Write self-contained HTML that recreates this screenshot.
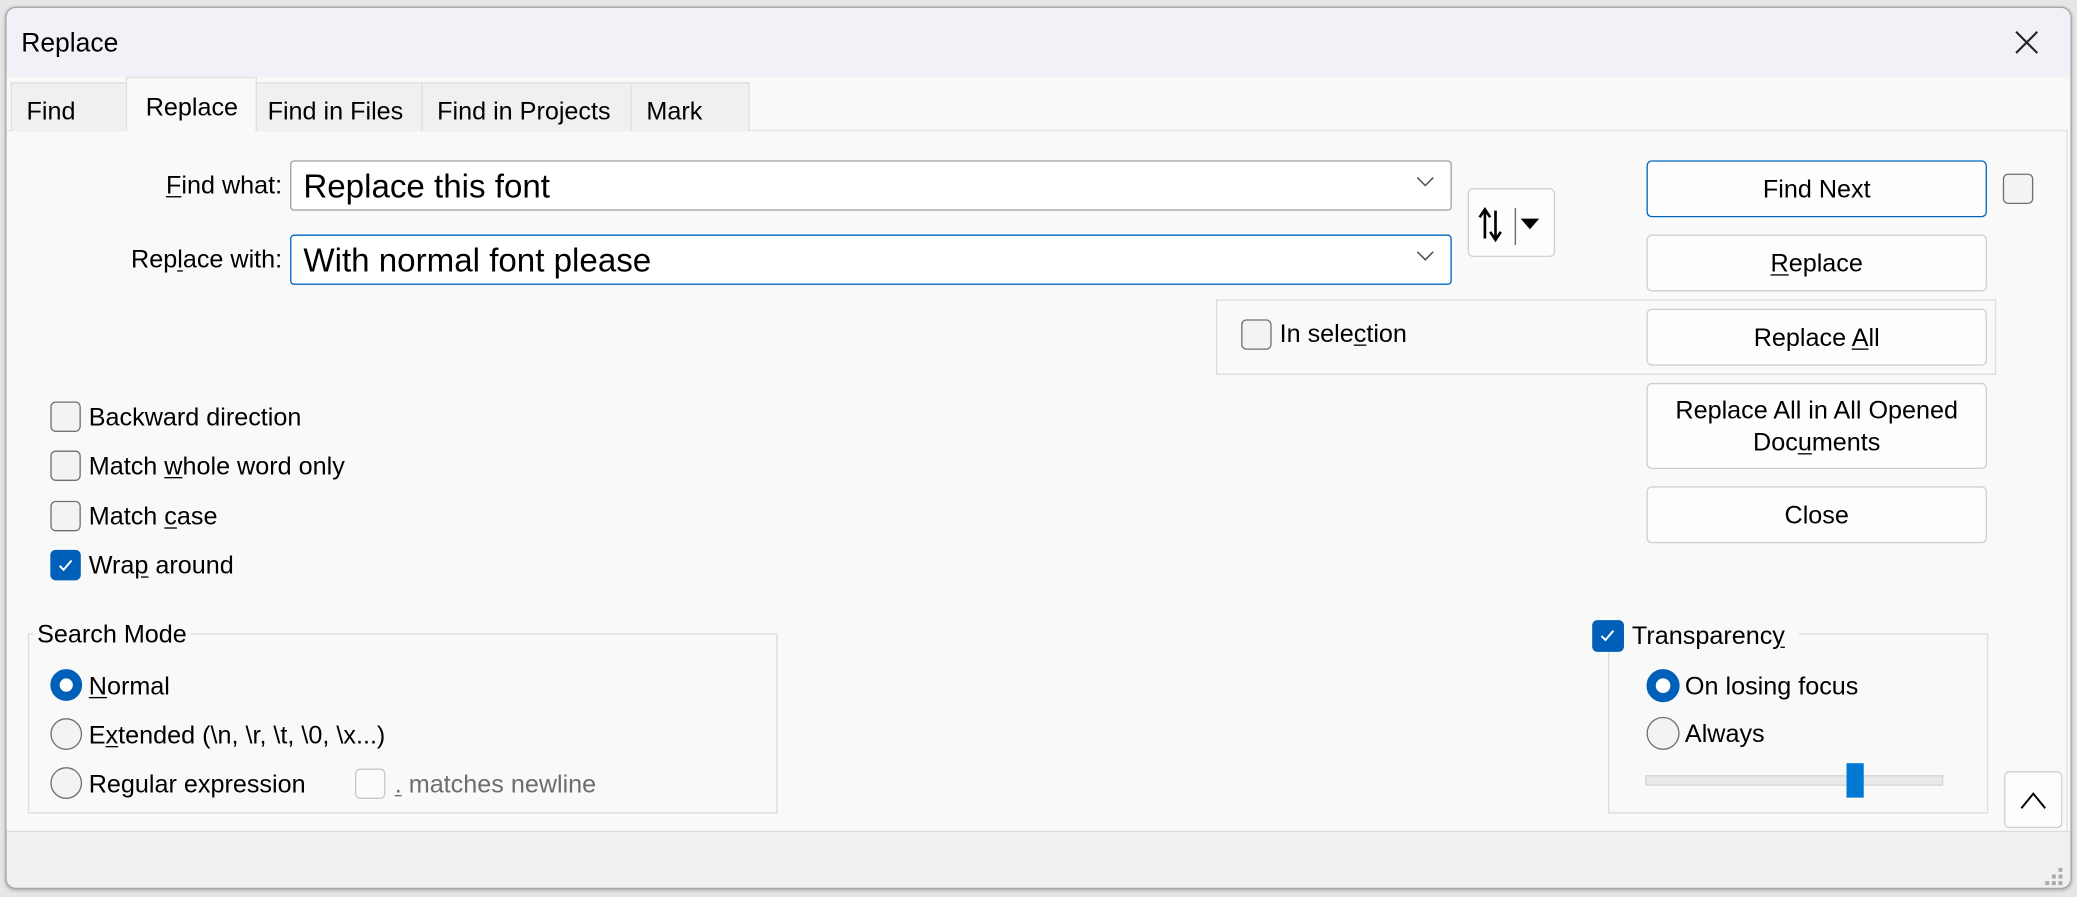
<!DOCTYPE html>
<html><head><meta charset="utf-8"><style>
*{box-sizing:border-box;margin:0;padding:0}
html,body{width:2077px;height:897px;overflow:hidden;background:#e6e6e6;font-family:"Liberation Sans",sans-serif;color:#000}
#w{position:absolute;left:0;top:0;width:1568px;height:677px;transform:scale(1.32462,1.325);transform-origin:0 0}
.a{position:absolute}
.dlg{left:4px;top:5px;width:1560px;height:666px;border:1px solid #a8a8a8;border-radius:8px;background:#f0f0f0;overflow:hidden;box-shadow:0 1px 3px rgba(0,0,0,.25)}
.t{font-size:19px;white-space:nowrap;line-height:22px}
.cb{width:23px;height:23px;border:1px solid #707070;border-radius:4px;background:#f3f3f3}
.cb.on{background:#005fb8;border-color:#005fb8}
.rd{width:24px;height:24px;border:1px solid #707070;border-radius:50%;background:#f3f3f3}
.rd.on{border:7px solid #005fb8;background:#fff}
.btn{background:#fdfdfd;border:1px solid #d0d0d0;border-radius:4px;font-size:19px;text-align:center;display:flex;align-items:center;justify-content:center;line-height:24px;padding-top:2px}
.tab{top:62px;height:37px;border:1px solid #e0e0e0;border-bottom:none;background:#f0f0f0;font-size:19px;padding-top:11px;padding-left:11px}
u{text-decoration:underline;text-underline-offset:2px}
.inp{background:#fff;border:1px solid #a0a0a0;border-radius:3px;font-size:25px;padding-left:9px;line-height:38px}
.chev{position:absolute;right:12px;top:10px}
</style></head><body><div id="w">
<div class="a dlg"></div>
<div class="a" style="left:5px;top:6px;width:1558px;height:52px;background:#f0f2f8;border-radius:8px 8px 0 0"></div>
<div class="a t" style="left:16px;top:22px;font-size:20px">Replace</div>
<svg class="a" style="left:1521px;top:23px" width="18" height="18"><path d="M1 1L17 17M17 1L1 17" stroke="#222" stroke-width="1.6"/></svg>
<div class="a" style="left:5px;top:58px;width:1558px;height:570px;background:#f9f9f9"></div>
<div class="a" style="left:5px;top:98px;width:1556px;height:1px;background:#e2e2e2"></div>
<div class="a" style="left:1560px;top:98px;width:1px;height:530px;background:#e2e2e2"></div>
<div class="a" style="left:5px;top:627px;width:1558px;height:1px;background:#dcdcdc"></div>
<div class="a tab" style="left:8px;width:88px">Find</div>
<div class="a tab" style="left:95px;top:58px;height:41px;width:99px;background:#f9f9f9;padding-top:12px;padding-left:14px">Replace</div>
<div class="a tab" style="left:193px;width:126px;padding-left:8px">Find in Files</div>
<div class="a tab" style="left:318px;width:159px">Find in Projects</div>
<div class="a tab" style="left:476px;width:90px">Mark</div>

<div class="a t" style="left:13px;width:200px;text-align:right;top:130px"><u>F</u>ind what:</div>
<div class="a inp" style="left:219px;top:121px;width:877px;height:38px">Replace this font<svg class="chev" width="14" height="10"><path d="M1 2L7 8L13 2" fill="none" stroke="#555" stroke-width="1.2"/></svg></div>
<div class="a t" style="left:13px;width:200px;text-align:right;top:186px">Rep<u>l</u>ace with:</div>
<div class="a inp" style="left:219px;top:177px;width:877px;height:38px;border-color:#0067c0">With normal font please<svg class="chev" width="14" height="10"><path d="M1 2L7 8L13 2" fill="none" stroke="#555" stroke-width="1.2"/></svg></div>

<div class="a btn" style="left:1108px;top:142px;width:66px;height:52px"></div>
<svg class="a" style="left:1114px;top:155px" width="56" height="30"><path d="M7 25V4M3 9L7 3L11 9M15 4V25M11 20L15 26L19 20" fill="none" stroke="#000" stroke-width="2"/><path d="M30 2V30" stroke="#666" stroke-width="1"/><path d="M34 10H48L41 18Z" fill="#000"/></svg>

<div class="a btn" style="left:1243px;top:121px;width:257px;height:43px;border-color:#0067c0">Find Next</div>
<div class="a cb" style="left:1512px;top:131px"></div>
<div class="a btn" style="left:1243px;top:177px;width:257px;height:43px"><span><u>R</u>eplace</span></div>
<div class="a" style="left:918px;top:226px;width:589px;height:57px;border:1px solid #dcdcdc"></div>
<div class="a cb" style="left:937px;top:241px"></div>
<div class="a t" style="left:966px;top:242px">In sele<u>c</u>tion</div>
<div class="a btn" style="left:1243px;top:233px;width:257px;height:43px"><span>Replace <u>A</u>ll</span></div>
<div class="a btn" style="left:1243px;top:289px;width:257px;height:65px"><span>Replace All in All Opened<br>Doc<u>u</u>ments</span></div>
<div class="a btn" style="left:1243px;top:367px;width:257px;height:43px">Close</div>

<div class="a cb" style="left:38px;top:303px"></div><div class="a t" style="left:67px;top:305px">Backward direction</div>
<div class="a cb" style="left:38px;top:340px"></div><div class="a t" style="left:67px;top:342px">Match <u>w</u>hole word only</div>
<div class="a cb" style="left:38px;top:378px"></div><div class="a t" style="left:67px;top:380px">Match <u>c</u>ase</div>
<div class="a cb on" style="left:38px;top:415px"><svg width="21" height="21"><path d="M6 11L9 14L15 7" fill="none" stroke="#fff" stroke-width="1.5"/></svg></div><div class="a t" style="left:67px;top:417px">Wra<u>p</u> around</div>

<div class="a" style="left:21px;top:478px;width:566px;height:136px;border:1px solid #dcdcdc"></div>
<div class="a t" style="left:25px;top:469px;background:#f9f9f9;padding:0 3px">Search Mode</div>
<div class="a rd on" style="left:38px;top:505px"></div><div class="a t" style="left:67px;top:508px"><u>N</u>ormal</div>
<div class="a rd" style="left:38px;top:542px"></div><div class="a t" style="left:67px;top:545px">E<u>x</u>tended (\n, \r, \t, \0, \x...)</div>
<div class="a rd" style="left:38px;top:579px"></div><div class="a t" style="left:67px;top:582px">Regular expression</div>
<div class="a cb" style="left:268px;top:580px;border-color:#c8c8c8;background:#fbfbfb"></div><div class="a t" style="left:298px;top:582px;color:#6d6d6d"><u>.</u> matches newline</div>

<div class="a" style="left:1214px;top:478px;width:287px;height:136px;border:1px solid #dcdcdc"></div>
<div class="a" style="left:1200px;top:466px;width:158px;height:26px;background:#f9f9f9"></div>
<div class="a cb on" style="left:1202px;top:468px;width:24px;height:24px"><svg width="22" height="22"><path d="M6 11L9 14L15 7" fill="none" stroke="#fff" stroke-width="1.5"/></svg></div>
<div class="a t" style="left:1232px;top:470px">Transparenc<u>y</u></div>
<div class="a rd on" style="left:1243px;top:505px;width:25px;height:25px"></div><div class="a t" style="left:1272px;top:508px">On losing focus</div>
<div class="a rd" style="left:1243px;top:541px;width:25px;height:25px"></div><div class="a t" style="left:1272px;top:544px">Always</div>
<div class="a" style="left:1242px;top:585px;width:225px;height:8px;background:#e7e9ea;border:1px solid #d6d6d6"></div>
<div class="a" style="left:1394px;top:576px;width:13px;height:26px;background:#0078d4"></div>
<div class="a btn" style="left:1513px;top:582px;width:44px;height:43px;padding-top:0"><svg width="22" height="14"><path d="M2 13L11 2L20 13" fill="none" stroke="#000" stroke-width="1.5"/></svg></div>
<svg class="a" style="left:1541px;top:655px" width="20" height="14"><g fill="#aaa"><rect x="13" y="0" width="3" height="3"/><rect x="8" y="5" width="3" height="3"/><rect x="13" y="5" width="3" height="3"/><rect x="3" y="10" width="3" height="3"/><rect x="8" y="10" width="3" height="3"/><rect x="13" y="10" width="3" height="3"/></g></svg>
</div></body></html>
